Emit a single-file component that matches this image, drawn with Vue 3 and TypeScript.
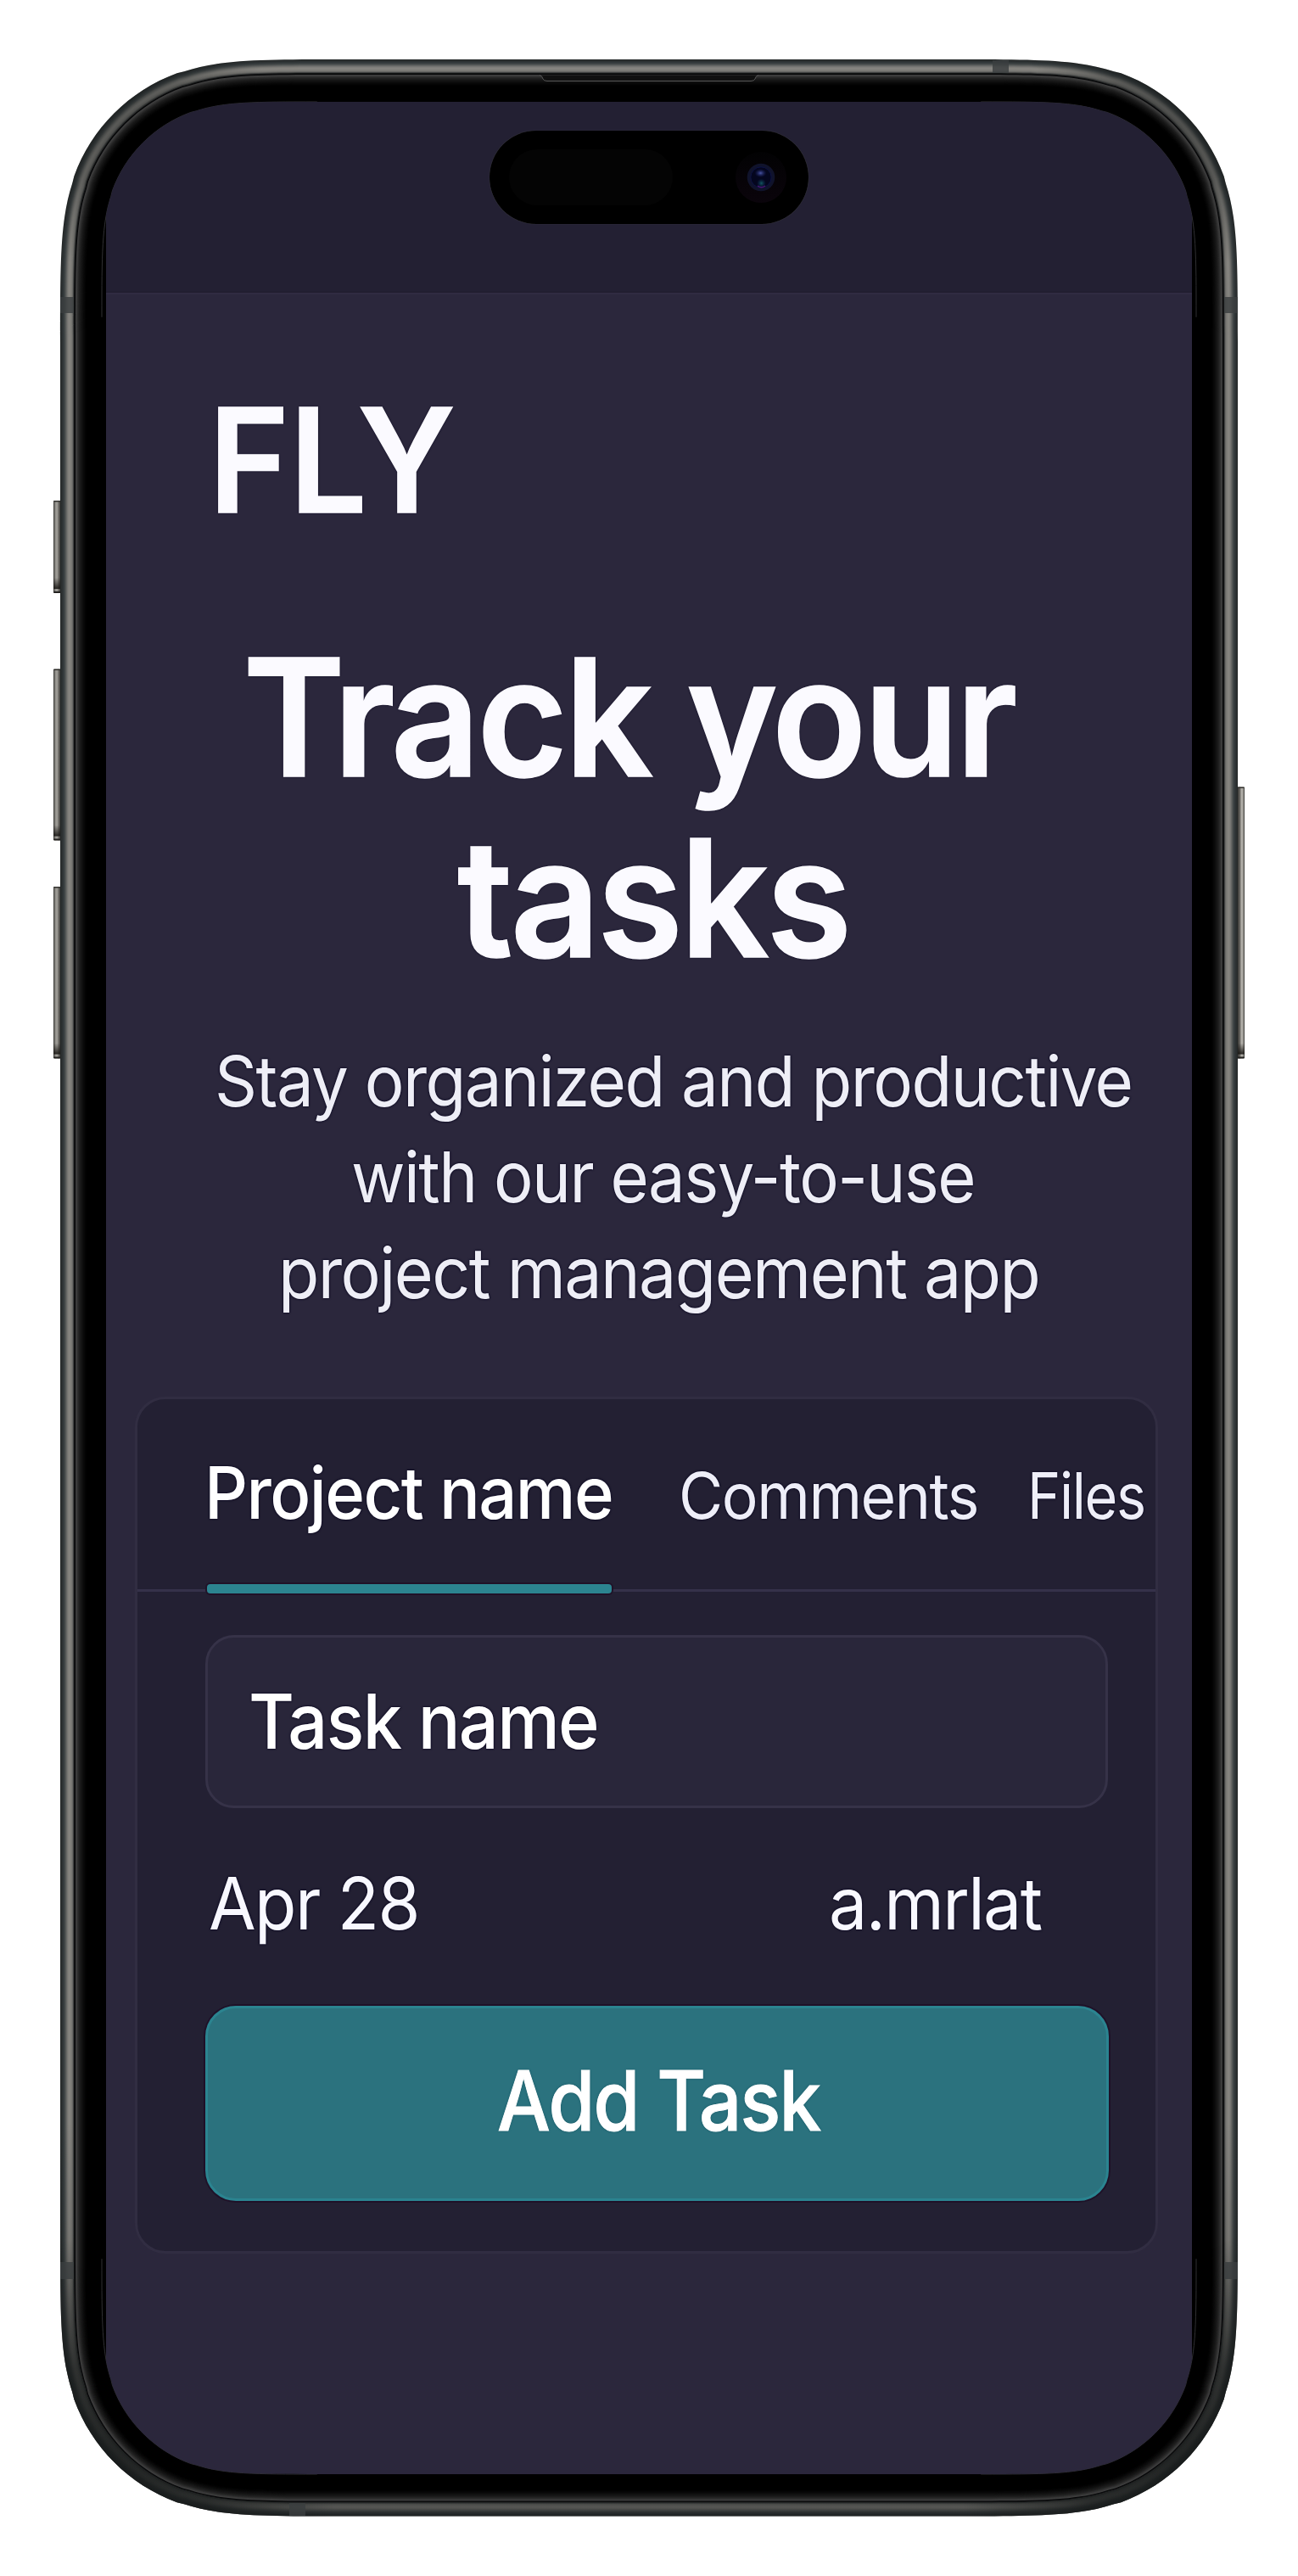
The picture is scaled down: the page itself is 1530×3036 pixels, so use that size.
<script setup lang="ts">
// Continuous-curvature corner, in multiples of the radius (from the side to the top edge).
type Pt = [number, number]
const CORNER: Pt[] = [
  [0, 1.5287], [0, 1.0885], [0, 0.8684], [0.0655, 0.6699], [0.0749, 0.6315],
  [0.1691, 0.3728], [0.3728, 0.1691], [0.6315, 0.0749], [0.6699, 0.0655],
  [0.8684, 0], [1.0885, 0], [1.5287, 0],
]

function cornerPoints(x: number, y: number, w: number, h: number, r: number): Pt[][] {
  const tl = CORNER.map(([a, b]): Pt => [x + a * r, y + b * r])
  const tr = CORNER.map(([a, b]): Pt => [x + w - a * r, y + b * r]).reverse()
  const br = CORNER.map(([a, b]): Pt => [x + w - a * r, y + h - b * r])
  const bl = CORNER.map(([a, b]): Pt => [x + a * r, y + h - b * r]).reverse()
  return [tl, tr, br, bl]
}

function curve(p: Pt[]): string {
  const s = p.map(([a, b]) => `${a.toFixed(2)} ${b.toFixed(2)}`)
  return `${s[0]} C${s[1]} ${s[2]} ${s[3]} L${s[4]} C${s[5]} ${s[6]} ${s[7]} L${s[8]} C${s[9]} ${s[10]} ${s[11]}`
}

function squircle(x: number, y: number, w: number, h: number, r: number): string {
  return 'M' + cornerPoints(x, y, w, h, r).map(curve).join(' L') + ' Z'
}

function frame(inset: number): string {
  return squircle(71 + inset, 70 + inset, 1388 - inset * 2, 2895.5 - inset * 2, 218 - inset)
}

const metal = [
  '#242828', '#2b2f30', '#2d3233', '#32383a', '#3a3f40', '#454a4a', '#555857', '#666765',
  '#757572', '#807f7a', '#858480', '#85837e', '#7e7d79', '#797874', '#676764', '#414242',
  '#141616', '#050507', '#3d3d3d', '#393939', '#2f2f2f', '#272727', '#202020', '#1b1b1b',
  '#161616', '#121212', '#0e0e0e', '#0a0a0a', '#070707', '#040404', '#020202', '#000000',
]
const rings = metal.map((color, i) => ({ color, d: frame(i) }))
const ringOnly = frame(0) + ' ' + frame(16)
const screenEdge = cornerPoints(120, 120, 1290, 2796, 166).map((p) => 'M' + curve(p)).join(' ')
const screenClip = { clipPath: `path('${squircle(-5, 0, 1290, 2796, 166)}')` }

const antennas = [
  { x: 71, y: 350, w: 16, h: 19 }, { x: 1443, y: 350, w: 16, h: 19 },
  { x: 71, y: 2666, w: 16, h: 20 }, { x: 1443, y: 2666, w: 16, h: 20 },
  { x: 1170, y: 71, w: 19, h: 15 }, { x: 341, y: 2950, w: 19, h: 15 },
]
const sideButtons = [
  { x: 63, y: 590, h: 109, fill: 'url(#keyLeft)' },
  { x: 63, y: 788.5, h: 202, fill: 'url(#keyLeft)' },
  { x: 63, y: 1045, h: 202.5, fill: 'url(#keyLeft)' },
  { x: 1458, y: 927.5, h: 320, fill: 'url(#keyRight)' },
]

const tabs = [
  { label: 'Project name', cls: 'tab tab-active' },
  { label: 'Comments', cls: 'tab tab-comments' },
  { label: 'Files', cls: 'tab tab-files' },
]
</script>

<template>
  <div class="stage">
    <svg class="device" width="1530" height="3036" viewBox="0 0 1530 3036" aria-hidden="true">
      <defs>
        <linearGradient id="keyLeft">
          <stop offset="0" stop-color="#2b2a28" /><stop offset=".2" stop-color="#85837e" />
          <stop offset=".45" stop-color="#a5a39d" /><stop offset=".75" stop-color="#5d5b57" />
          <stop offset="1" stop-color="#2d2c29" />
        </linearGradient>
        <linearGradient id="keyRight">
          <stop offset="0" stop-color="#2d2c29" /><stop offset=".35" stop-color="#5d5b57" />
          <stop offset=".6" stop-color="#b3b0aa" /><stop offset=".8" stop-color="#a5a39d" />
          <stop offset="1" stop-color="#2b2a28" />
        </linearGradient>
        <linearGradient id="keyEnd" x2="0" y2="1">
          <stop offset="0" stop-color="#171512" stop-opacity="0" /><stop offset="1" stop-color="#171512" stop-opacity=".9" />
        </linearGradient>
        <radialGradient id="shade">
          <stop offset="0" stop-color="#181b1b" stop-opacity=".85" />
          <stop offset=".45" stop-color="#181b1b" stop-opacity=".7" />
          <stop offset="1" stop-color="#181b1b" stop-opacity="0" />
        </radialGradient>
        <linearGradient id="base" x2="0" y2="1">
          <stop offset="0" stop-color="#171a1a" stop-opacity="0" /><stop offset="1" stop-color="#171a1a" stop-opacity=".45" />
        </linearGradient>
        <clipPath id="ring"><path :d="ringOnly" clip-rule="evenodd" /></clipPath>
      </defs>

      <g v-for="b in sideButtons" :key="b.y">
        <rect :x="b.x" :y="b.y" width="9" :height="b.h" rx="2" :fill="b.fill" />
        <rect :x="b.x" :y="b.y" width="9" height="1.4" rx=".7" fill="#33322f" />
        <rect :x="b.x" :y="b.y + b.h - 18" width="9" height="13" fill="url(#keyEnd)" />
        <rect :x="b.x" :y="b.y + b.h - 2" width="9" height="2" rx="1" fill="#22211f" />
      </g>

      <path v-for="(r, i) in rings" :key="i" :d="r.d" :fill="r.color" />
      <g clip-path="url(#ring)">
        <circle cx="125" cy="125" r="190" fill="url(#shade)" opacity=".5" />
        <circle cx="1405" cy="125" r="190" fill="url(#shade)" opacity=".6" />
        <circle cx="130" cy="2905" r="270" fill="url(#shade)" />
        <circle cx="1400" cy="2905" r="270" fill="url(#shade)" />
        <rect x="71" y="2500" width="1388" height="466" fill="url(#base)" />
      </g>
      <rect v-for="(a, i) in antennas" :key="'a' + i" :x="a.x" :y="a.y" :width="a.w" :height="a.h" fill="#3b3e40" opacity=".82" />
      <path d="M636 88.5 Q639 89 640 93 Q641 95.5 645 95.5 H885 Q889 95.5 890 93 Q891 89 894 88.5 Z" fill="#101010" />
      <path d="M636 88.5 Q639 89 640 93 Q641 95.5 645 95.5 H885 Q889 95.5 890 93 Q891 89 894 88.5" fill="none" stroke="#565656" />
      <path :d="screenEdge" fill="none" stroke="#303033" stroke-width="1" />
    </svg>

    <div class="screen" :style="screenClip">
      <header class="status">
        <div class="island">
          <span class="sensor"></span>
          <svg class="camera" width="60" height="60" viewBox="0 0 60 60" aria-hidden="true">
            <defs>
              <linearGradient id="halo" x2="0" y2="1"><stop offset="0" stop-color="#020203" /><stop offset="1" stop-color="#0a040b" /></linearGradient>
              <radialGradient id="glow"><stop offset="0" stop-color="#4a56a5" /><stop offset="1" stop-color="#1a2068" stop-opacity="0" /></radialGradient>
              <radialGradient id="teal"><stop offset="0" stop-color="#12585f" /><stop offset="1" stop-color="#0b2a55" stop-opacity="0" /></radialGradient>
            </defs>
            <circle cx="30" cy="30" r="30" fill="url(#halo)" />
            <circle cx="30" cy="30" r="16.3" fill="#10132b" />
            <circle cx="30" cy="30" r="12.2" fill="#04061e" stroke="#0d1244" />
            <ellipse cx="29.5" cy="25" rx="7" ry="5" fill="url(#glow)" />
            <circle cx="30.5" cy="37" r="5.5" fill="url(#teal)" />
            <path d="M26 40 Q30.5 43.5 35 40" fill="none" stroke="#4a1570" stroke-width="1.5" />
          </svg>
        </div>
      </header>

      <main class="content">
        <div class="brand">FLY</div>
        <h1 class="title">
          <span class="title-a">Track your</span>
          <span class="title-b">tasks</span>
        </h1>
        <p class="lead">
          <span class="lead-a">Stay organized and productive</span>
          <span class="lead-b">with our easy-to-use</span>
          <span class="lead-c">project management app</span>
        </p>

        <section class="card">
          <nav class="tabs">
            <div v-for="t in tabs" :key="t.label" :class="t.cls"><span>{{ t.label }}</span></div>
          </nav>
          <div class="field"><span>Task name</span></div>
          <div class="meta">
            <span class="date">Apr 28</span>
            <span class="user">a.mrlat</span>
          </div>
          <button class="add" type="button"><span>Add Task</span></button>
        </section>
      </main>
    </div>
  </div>
</template>

<style>
body { background: #fff; }
</style>

<style scoped>
.stage {
  position: relative;
  box-sizing: border-box;
  width: 1530px;
  height: 3036px;
  padding: 120px 125px;
  overflow: hidden;
  background: #fff;
  font-family: Inter, "Liberation Sans", sans-serif;
  color: #fbfaff;
}
.device { position: absolute; inset: 0; }
.screen {
  position: relative;
  display: flex;
  flex-direction: column;
  width: 1280px;
  height: 2796px;
  background: #2b273c;
}
.status {
  box-sizing: border-box;
  flex: none;
  height: 225px;
  padding: 34px 0 0 452px;
  background: #232033;
  border-bottom: 2px solid #211e30;
}
.island {
  box-sizing: border-box;
  display: flex;
  align-items: center;
  justify-content: space-between;
  width: 376px;
  height: 110px;
  padding: 0 26px 0 23px;
  border-radius: 55px;
  background: #000;
  box-shadow: 0 0 1px #555;
}
.sensor { width: 193px; height: 66px; border-radius: 33px; background: #040404; }
.content {
  flex: 1;
  border-top: 2px solid #302b42;
  text-shadow: 0 0 3px #090620, 0 0 2px #090620;
  white-space: nowrap;
}
.content span { display: block; transform-origin: 0 0; letter-spacing: -0.02em; }
.brand {
  width: 306px;
  margin: 92px 0 0 121px;
  font-size: 170px;
  font-weight: 600;
  line-height: 206px;
  -webkit-text-stroke: 1.5px #fbfaff;
  transform: scaleX(0.952);
  transform-origin: 0 0;
}
.title {
  margin: 94px 0 0;
  font-size: 193px;
  font-weight: 600;
  line-height: 213px;
  -webkit-text-stroke: 1.5px #fbfaff;
}
.title-a { width: 985px; margin-left: 161px; transform: scaleX(0.951); }
.title-b { width: 497px; margin-left: 413.5px; transform: scaleX(0.957); }
.lead { margin: 53px 0 0; font-size: 83px; line-height: 113px; color: #eeeef6; }
.lead-a { width: 1100px; margin-left: 128px; transform: scaleX(0.9406); }
.lead-b { width: 818px; margin-left: 289px; transform: scaleX(0.937); }
.lead-c { width: 980px; margin-left: 203px; transform: scaleX(0.951); }
.card {
  box-sizing: border-box;
  width: 1206px;
  height: 1010px;
  margin: 89px 0 0 34px;
  border: 3px solid #312d42;
  border-radius: 36px;
  background: #232033;
}
.tabs {
  box-sizing: border-box;
  display: flex;
  align-items: baseline;
  height: 227px;
  padding: 61px 0 0 82px;
  border-bottom: 3px solid #35314a;
}
.tab { flex: none; line-height: 100px; font-size: 75px; color: #eeeef8; }
.tab-active { position: relative; width: 477px; font-size: 85px; font-weight: 450; color: #fff; }
.tab-active span { width: 477px; margin-left: -3px; transform: scaleX(0.937); }
.tab-active::after {
  content: "";
  position: absolute;
  left: 0;
  bottom: -68px;
  width: 477px;
  height: 11px;
  border-radius: 4px;
  background: #2c8490;
  box-shadow: 0 0 0 2px #201228;
}
.tab-comments { width: 352px; margin-left: 79px; }
.tab-comments span { width: 352px; transform: scaleX(0.953); }
.tab-files { width: 142px; margin-left: 59px; }
.tab-files span { width: 142px; transform: scaleX(0.888); }
.field {
  box-sizing: border-box;
  width: 1064px;
  height: 204px;
  margin: 51px 0 0 80px;
  padding-left: 48px;
  border: 3px solid #363248;
  border-radius: 34px;
  background: #29263a;
  font-size: 90px;
  font-weight: 450;
  line-height: 198px;
  color: #fff;
}
.field span { width: 460px; transform: scaleX(0.92); }
.meta {
  display: flex;
  justify-content: space-between;
  width: 982px;
  margin: 61px 0 0 84px;
  font-size: 85px;
  line-height: 103px;
  color: #f8f8ff;
}
.date { width: 271px; transform: scaleX(0.95); }
.user { width: 251px; transform: scaleX(0.948); }
.add {
  display: block;
  box-sizing: border-box;
  width: 1065px;
  height: 230px;
  margin: 69px 0 0 80px;
  padding: 0 0 7px 341px;
  border: 3px solid #2b8490;
  border-radius: 36px;
  background: #2b727e;
  box-shadow: 0 0 0 2px #1f1128;
  font-family: inherit;
  font-size: 97px;
  font-weight: 500;
  line-height: 215px;
  text-align: left;
  color: #fff;
  text-shadow: 0 0 3px #0d4b59;
  -webkit-text-stroke: 1px #fff;
}
.add span { width: 432px; transform: scaleX(0.914); }
</style>
